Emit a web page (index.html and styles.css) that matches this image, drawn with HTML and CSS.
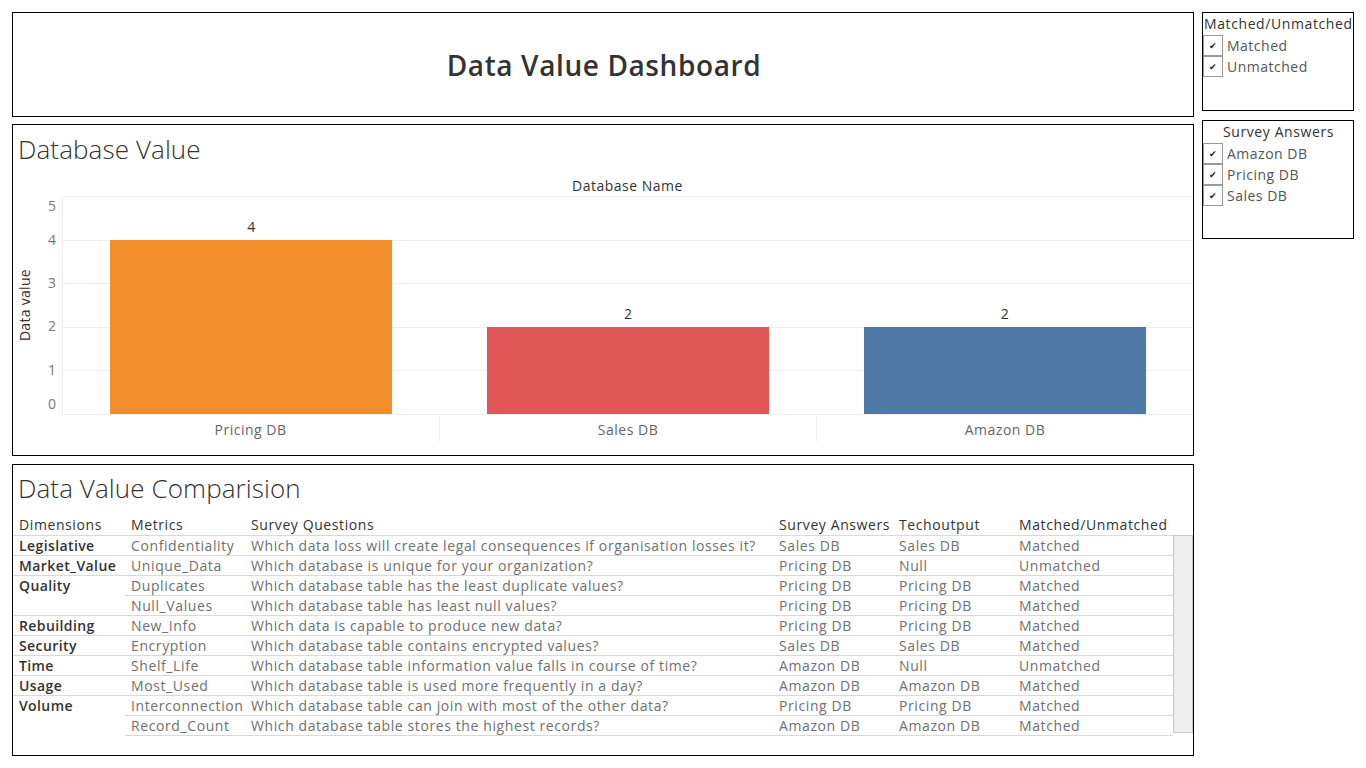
FILE: index.html
```html
<!DOCTYPE html>
<html>
<head>
<meta charset="utf-8">
<link rel="stylesheet" href="styles.css">
</head>
<body>
<div class="page">
  <div class="main">
    <section class="box title-box">
      <h1>Data Value Dashboard</h1>
    </section>

    <section class="box chart-box">
      <h2 class="sheet-title">Database Value</h2>
      <div class="col-header">Database Name</div>
      <div class="chart">
        <div class="y-title-wrap"><span class="y-title">Data value</span></div>
        <div class="y-ticks">
          <span>5</span><span>4</span><span>3</span><span>2</span><span>1</span><span>0</span>
        </div>
        <div class="plot-wrap">
          <div class="plot">
            <div class="pane">
              <div class="bar-label">4</div>
              <div class="bar orange" style="height:174px"></div>
            </div>
            <div class="pane">
              <div class="bar-label">2</div>
              <div class="bar red" style="height:87px"></div>
            </div>
            <div class="pane">
              <div class="bar-label">2</div>
              <div class="bar blue" style="height:87px"></div>
            </div>
          </div>
          <div class="x-labels">
            <div>Pricing DB</div>
            <div>Sales DB</div>
            <div>Amazon DB</div>
          </div>
        </div>
      </div>
    </section>

    <section class="box table-box">
      <h2 class="sheet-title">Data Value Comparision</h2>
      <div class="table-wrap">
        <table class="data">
          <colgroup>
            <col class="c1"><col class="c2"><col class="c3"><col class="c4"><col class="c5"><col class="c6">
          </colgroup>
          <thead>
            <tr><th>Dimensions</th><th>Metrics</th><th>Survey Questions</th><th>Survey Answers</th><th>Techoutput</th><th>Matched/Unmatched</th></tr>
          </thead>
          <tbody>
            <tr><td class="dim">Legislative</td><td>Confidentiality</td><td>Which data loss will create legal consequences if organisation losses it?</td><td>Sales DB</td><td>Sales DB</td><td>Matched</td></tr>
            <tr><td class="dim">Market_Value</td><td>Unique_Data</td><td>Which database is unique for your organization?</td><td>Pricing DB</td><td>Null</td><td>Unmatched</td></tr>
            <tr><td class="dim" rowspan="2">Quality</td><td>Duplicates</td><td>Which database table has the least duplicate values?</td><td>Pricing DB</td><td>Pricing DB</td><td>Matched</td></tr>
            <tr><td>Null_Values</td><td>Which database table has least null values?</td><td>Pricing DB</td><td>Pricing DB</td><td>Matched</td></tr>
            <tr><td class="dim">Rebuilding</td><td>New_Info</td><td>Which data is capable to produce new data?</td><td>Pricing DB</td><td>Pricing DB</td><td>Matched</td></tr>
            <tr><td class="dim">Security</td><td>Encryption</td><td>Which database table contains encrypted values?</td><td>Sales DB</td><td>Sales DB</td><td>Matched</td></tr>
            <tr><td class="dim">Time</td><td>Shelf_Life</td><td>Which database table information value falls in course of time?</td><td>Amazon DB</td><td>Null</td><td>Unmatched</td></tr>
            <tr><td class="dim">Usage</td><td>Most_Used</td><td>Which database table is used more frequently in a day?</td><td>Amazon DB</td><td>Amazon DB</td><td>Matched</td></tr>
            <tr><td class="dim" rowspan="2">Volume</td><td>Interconnection</td><td>Which database table can join with most of the other data?</td><td>Pricing DB</td><td>Pricing DB</td><td>Matched</td></tr>
            <tr class="last"><td>Record_Count</td><td>Which database table stores the highest records?</td><td>Amazon DB</td><td>Amazon DB</td><td>Matched</td></tr>
          </tbody>
        </table>
        <div class="scrollbar"></div>
      </div>
    </section>
  </div>

  <aside class="side">
    <div class="box legend legend-1">
      <div class="legend-title">Matched/Unmatched</div>
      <div class="item"><span class="check">&#10004;</span><span>Matched</span></div>
      <div class="item"><span class="check">&#10004;</span><span>Unmatched</span></div>
    </div>
    <div class="box legend legend-2">
      <div class="legend-title center">Survey Answers</div>
      <div class="item"><span class="check">&#10004;</span><span>Amazon DB</span></div>
      <div class="item"><span class="check">&#10004;</span><span>Pricing DB</span></div>
      <div class="item"><span class="check">&#10004;</span><span>Sales DB</span></div>
    </div>
  </aside>
</div>
</body>
</html>
```

FILE: styles.css
```css
* { box-sizing: border-box; }
html, body { margin: 0; padding: 0; background: #fff; }
body {
  font-family: "Open Sans", "Noto Sans", "Liberation Sans", sans-serif;
  color: #333;
}
.page {
  display: flex;
  gap: 8px;
  padding: 12px 0 0 12px;
}
.main {
  width: 1182px;
  display: flex;
  flex-direction: column;
}
.box { border: 1px solid #000; background: #fff; }

.title-box {
  height: 105px;
  display: flex;
  align-items: center;
  justify-content: center;
}
.title-box h1 {
  margin: 0 0 0 2px;
  font-size: 28px;
  font-weight: 600;
  color: #333;
  letter-spacing: 0.6px;
}

.sheet-title {
  margin: 0;
  font-size: 26px;
  font-weight: 300;
  color: #333;
  line-height: 34px;
  padding-left: 5px;
  letter-spacing: 0.1px;
}

/* chart */
.chart-box { height: 332px; padding-top: 7px; margin-top: 7px; }
.col-header {
  margin-left: 49px;
  text-align: center;
  font-size: 14px;
  font-weight: 500;
  color: #333;
  line-height: 18px;
  margin-top: 11px;
  letter-spacing: 0.5px;
}
.chart {
  display: flex;
  margin-top: 1px;
}
.y-title-wrap {
  width: 22px;
  height: 218px;
  display: flex;
  align-items: center;
  justify-content: center;
}
.y-title {
  writing-mode: vertical-rl;
  transform: rotate(180deg);
  font-size: 14px;
  font-weight: 500;
  color: #333;
  letter-spacing: 0.3px;
}
.y-ticks {
  width: 27px;
  height: 218px;
  display: flex;
  flex-direction: column;
  align-items: flex-end;
  padding-right: 6px;
  font-size: 14px;
  color: #777;
  line-height: 16px;
}
.y-ticks span:nth-child(1) { margin-top: 2px; }
.y-ticks span:nth-child(2) { margin-top: 18px; }
.y-ticks span:nth-child(3) { margin-top: 27px; }
.y-ticks span:nth-child(4) { margin-top: 27px; }
.y-ticks span:nth-child(5) { margin-top: 28px; }
.y-ticks span:nth-child(6) { margin-top: 18px; }

.plot-wrap { width: 1131px; }
.plot {
  height: 219px;
  display: grid;
  grid-template-columns: repeat(3, 1fr);
  border-left: 1px solid #eee;
  border-bottom: 1px solid #eee;
  background-image: repeating-linear-gradient(to bottom, #efefef 0, #efefef 1px, transparent 1px, transparent 43.6px);
}
.pane {
  display: flex;
  flex-direction: column;
  justify-content: flex-end;
  align-items: center;
}
.bar { width: 282px; }
.bar-label {
  font-size: 14px;
  color: #333;
  line-height: 16px;
  margin-bottom: 5px;
}
.orange { background: #f28e2b; }
.red { background: #e15759; }
.blue { background: #4e79a7; }

.x-labels {
  display: grid;
  grid-template-columns: repeat(3, 1fr);
  height: 24px;
}
.x-labels div {
  text-align: center;
  font-size: 14px;
  color: #666;
  line-height: 22px;
  padding-top: 4px;
  border-left: 1px solid #f0f0f0;
  letter-spacing: 0.5px;
}
.x-labels div:first-child { border-left: none; }

/* table */
.table-box { height: 292px; padding-top: 6px; margin-top: 8px; }
.table-wrap {
  display: flex;
  margin-top: 10px;
}
.data {
  width: 1160px;
  border-collapse: collapse;
  table-layout: fixed;
  font-size: 14px;
  letter-spacing: 0.6px;
}
.c1 { width: 112px; }
.c2 { width: 120px; }
.c3 { width: 528px; }
.c4 { width: 120px; }
.c5 { width: 120px; }
.c6 { width: 160px; }
.data th {
  text-align: left;
  font-weight: 500;
  color: #333;
  height: 20px;
  padding: 0 0 0 6px;
  line-height: 20px;
  white-space: nowrap;
  overflow: visible;
}
.data td {
  height: 20px;
  padding: 0 0 0 6px;
  line-height: 19px;
  color: #707070;
  white-space: nowrap;
  vertical-align: top;
  border-top: 1px solid #d9d9d9;
}
.data tr.last td { border-bottom: 1px solid #d9d9d9; }
.data td.dim {
  color: #333;
  font-weight: 600;
  letter-spacing: 0.4px;
}
.scrollbar {
  width: 20px;
  height: 198px;
  margin-top: 20px;
  background: #eee;
  border: 1px solid #c8c8c8;
}

/* legends */
.side {
  width: 152px;
  display: flex;
  flex-direction: column;
  gap: 9px;
}
.legend { padding-top: 1px; }
.legend-1 { height: 99px; }
.legend-2 { height: 119px; }
.legend-title {
  font-size: 14px;
  font-weight: 500;
  color: #333;
  line-height: 19px;
  padding-left: 1px;
  white-space: nowrap;
  margin-bottom: 2px;
  letter-spacing: 0.6px;
}
.legend-title.center { text-align: center; }
.item {
  display: flex;
  align-items: center;
  height: 21px;
  font-size: 14px;
  color: #555;
  letter-spacing: 0.5px;
}
.check {
  width: 20px;
  height: 21px;
  border: 1px solid #999;
  margin-top: -1px;
  display: flex;
  align-items: center;
  justify-content: center;
  font-size: 9px;
  color: #222;
  margin-right: 4px;
  flex: none;
  letter-spacing: 0;
}
.item:first-of-type .check { margin-top: 0; }
```
